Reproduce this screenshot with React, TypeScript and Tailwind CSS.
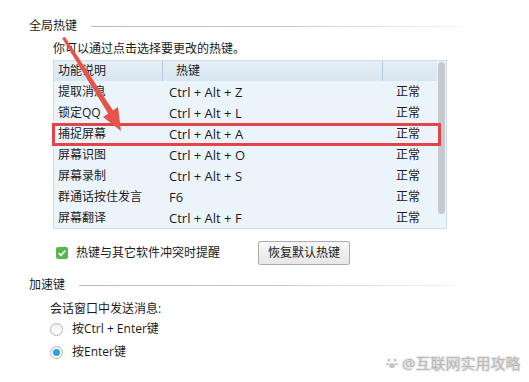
import React from 'react';

const rows = [
  ['提取消息', 'Ctrl + Alt + Z'],
  ['锁定QQ', 'Ctrl + Alt + L'],
  ['捕捉屏幕', 'Ctrl + Alt + A'],
  ['屏幕识图', 'Ctrl + Alt + O'],
  ['屏幕录制', 'Ctrl + Alt + S'],
  ['群通话按住发言', 'F6'],
  ['屏幕翻译', 'Ctrl + Alt + F'],
];

function GroupTitle({ label, lineWidth }: { label: string; lineWidth: string }) {
  return (
    <div className="flex items-center h-5">
      <span>{label}</span>
      <div className={`ml-[14px] h-px bg-gradient-to-r from-[#b9b9b9] via-[#c9c9c9] to-[#f4f4f4] ${lineWidth}`} />
    </div>
  );
}

function Radio({ checked }: { checked?: boolean }) {
  return (
    <span className="w-[13px] h-[13px] rounded-full border border-[#b5b5b5] bg-gradient-to-b from-[#f2f2f2] to-white flex items-center justify-center">
      {checked && <span className="w-[7px] h-[7px] rounded-full bg-[#2aa3e0]" />}
    </span>
  );
}

export default function App() {
  return (
    <div className="relative w-[529px] h-[382px] bg-white overflow-hidden text-[12px] text-[#1b1b1b] leading-5 [font-family:'Open_Sans','Noto_Sans_CJK_SC',sans-serif]">
      <div className="pt-[16px] pl-[29px]">
        <GroupTitle label="全局热键" lineWidth="w-[369px]" />

        <div className="ml-[24px] mt-[3px]">
          <div className="h-5">你可以通过点击选择要更改的热键。</div>

          {/* hotkey list */}
          <div className="relative mt-px w-[394px] border border-[#cfdbe6] bg-[#ecf4fb] flex">
            <div className="flex-1 flex flex-col">
              <div className="h-[20px] flex items-center bg-gradient-to-b from-[#e6eef6] to-[#d8e5f0]">
                <div className="w-[108px] pl-[4px]">功能说明</div>
                <div className="w-[220px] h-full flex items-center border-l border-[#b9cadb] pl-[13px]">热键</div>
                <div className="flex-1 h-full border-l border-[#b9cadb]" />
              </div>
              {rows.map(([name, key]) => (
                <div key={name} className="h-[21px] flex items-center">
                  <div className="w-[108px] pl-[4px]">{name}</div>
                  <div className="w-[220px] pl-[7px] text-[13px]">{key}</div>
                  <div className="flex-1 pl-[14px]">正常</div>
                </div>
              ))}
            </div>
            <div className="w-[9px] pt-px pl-px">
              <div className="w-[7px] h-[152px] rounded-full bg-[#c6cacf]" />
            </div>

            <div className="absolute top-[62px] left-[-2px] w-[389px] h-[23px] border-[3px] border-[#e2444a]" />
          </div>

          <div className="mt-[12px] h-[24px] flex items-center">
            <span className="ml-[3px] w-[12px] h-[12px] rounded-[2px] bg-[#57b552] flex items-center justify-center">
              <svg width="10" height="10" viewBox="0 0 10 10">
                <path d="M1.8 5.2 L4 7.3 L8.3 2.6" fill="none" stroke="white" strokeWidth="1.6" />
              </svg>
            </span>
            <span className="ml-[8px]">热键与其它软件冲突时提醒</span>
            <button className="ml-[38px] w-[92px] h-[24px] border border-[#adadad] rounded-[2px] bg-gradient-to-b from-[#f6f6f6] to-[#e7e7e7] text-[12px]">
              恢复默认热键
            </button>
          </div>
        </div>

        <div className="mt-[10px]">
          <GroupTitle label="加速键" lineWidth="w-[376px]" />
        </div>

        <div className="ml-[21px] mt-[4px]">
          <div className="h-5">会话窗口中发送消息:</div>
          <div className="h-5 flex items-center">
            <Radio />
            <span className="ml-[9px]">按Ctrl + Enter键</span>
          </div>
          <div className="mt-[3px] h-5 flex items-center">
            <Radio checked />
            <span className="ml-[9px]">按Enter键</span>
          </div>
        </div>
      </div>

      {/* annotation arrow */}
      <svg className="absolute inset-0 pointer-events-none" width="529" height="382" viewBox="0 0 529 382">
        <polygon points="62,38 65,37 114,112 109,115" fill="#e6534b" />
        <polygon points="121,131 103,117 118,107" fill="#e6534b" />
      </svg>

      {/* watermark */}
      <div className="absolute left-[386px] top-[353px] flex items-center gap-[4px] text-[15px] text-[#b8b8b8] [text-shadow:0_0_1px_#fff,0_0_2px_#999]">
        <svg width="12" height="12" viewBox="0 0 12 12" fill="#c4c4c4">
          <circle cx="3" cy="3" r="1.5" />
          <circle cx="9" cy="3" r="1.5" />
          <circle cx="1.5" cy="7" r="1.3" />
          <circle cx="10.5" cy="7" r="1.3" />
          <ellipse cx="6" cy="8.5" rx="3" ry="2.5" />
        </svg>
        <span>@互联网实用攻略</span>
      </div>
    </div>
  );
}
